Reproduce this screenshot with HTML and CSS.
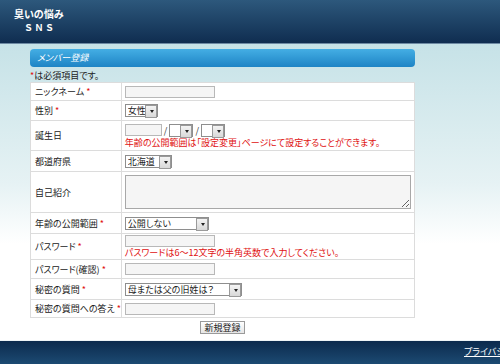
FILE: index.html
```html
<!DOCTYPE html>
<html lang="ja">

<head>
  <meta charset="UTF-8" />
  <meta name="viewport" content="width=device-width, initial-scale=1.0" />
  <title>臭いの悩み SNS - メンバー登録</title>
  <link rel="stylesheet" href="styles.css">
</head>

<body>
  <div class="header">
    <h1 class="logo">臭いの悩み<span>ＳＮＳ</span></h1>
  </div>

  <div class="main">
    <div class="content">
      <h2 class="box-title">メンバー登録</h2>
      <p class="note"><em>*</em>は必須項目です。</p>

      <form class="regist">
        <table class="form-table">
          <tr class="r-nick">
            <th>ニックネーム <em>*</em></th>
            <td><input type="text" class="txt" /></td>
          </tr>
          <tr class="r-sex">
            <th>性別 <em>*</em></th>
            <td><span class="sel w-sex"><select><option>女性</option></select></span></td>
          </tr>
          <tr class="r-birth">
            <th>誕生日</th>
            <td>
              <div class="birth">
                <input type="text" class="txt w-year" />
                <span class="slash">/</span>
                <span class="sel w-md"><select><option></option></select></span>
                <span class="slash">/</span>
                <span class="sel w-md"><select><option></option></select></span>
              </div>
              <p class="caution">年齢の公開範囲は「設定変更」ページにて設定することができます。</p>
            </td>
          </tr>
          <tr class="r-pref">
            <th>都道府県</th>
            <td><span class="sel w-pref"><select><option>北海道</option></select></span></td>
          </tr>
          <tr class="r-intro">
            <th>自己紹介</th>
            <td><textarea class="area"></textarea></td>
          </tr>
          <tr class="r-age">
            <th>年齢の公開範囲 <em>*</em></th>
            <td><span class="sel w-age"><select><option>公開しない</option></select></span></td>
          </tr>
          <tr class="r-pass">
            <th>パスワード <em>*</em></th>
            <td>
              <input type="password" class="txt" />
              <p class="caution">パスワードは6～12文字の半角英数で入力してください。</p>
            </td>
          </tr>
          <tr class="r-pass2">
            <th>パスワード(確認) <em>*</em></th>
            <td><input type="password" class="txt" /></td>
          </tr>
          <tr class="r-q">
            <th>秘密の質問 <em>*</em></th>
            <td><span class="sel w-q"><select><option>母または父の旧姓は？</option></select></span></td>
          </tr>
          <tr class="r-a">
            <th>秘密の質問への答え <em>*</em></th>
            <td><input type="text" class="txt" /></td>
          </tr>
        </table>
        <div class="operation">
          <button type="button" class="btn">新規登録</button>
        </div>
      </form>
    </div>
  </div>

  <div class="footer">
    <a href="#">プライバシーポリシー</a>
  </div>
</body>

</html>
```

FILE: styles.css
```css
* {
  box-sizing: border-box;
}

body {
  margin: 0;
  font-family: "Noto Sans CJK JP", "Noto Sans", sans-serif;
  font-size: 9px;
  font-feature-settings: "palt";
  color: #333;
  background: #fff;
}

/* ヘッダー */
.header {
  height: 44px;
  background: linear-gradient(#2d587c, #0f2d50);
  border-bottom: 1px solid #6d8aa3;
  padding: 7px 0 0 14px;
}

.logo {
  margin: 0;
  color: #fff;
  font-size: 10px;
  font-weight: bold;
  line-height: 13px;
}

.logo span {
  display: block;
  margin: 1px 0 0 11px;
  font-size: 9px;
  letter-spacing: 3px;
}

/* メイン */
.main {
  height: 296px;
  background: linear-gradient(#c6e2e7, #e6f2f4 140px, #fff 200px);
  padding-top: 5px;
}

.content {
  width: 385px;
  margin-left: 30px;
}

.box-title {
  margin: 0;
  height: 18px;
  line-height: 17px;
  padding-left: 7px;
  border-radius: 4px;
  background: linear-gradient(#44aee4, #1e84c5);
  color: #fff;
  font-size: 9px;
  font-weight: normal;
  font-style: italic;
}

.note {
  margin: 3px 0 0;
  height: 12px;
  line-height: 12px;
  color: #222;
}

em {
  font-style: normal;
  color: #e01010;
}

/* フォーム */
.form-table {
  width: 100%;
  border-collapse: collapse;
  background: #fff;
  border: 1px solid #dcdcdc;
}

.form-table th,
.form-table td {
  border-bottom: 1px solid #dcdcdc;
  padding: 0 0 0 3px;
  vertical-align: middle;
  text-align: left;
  font-weight: normal;
}

.form-table th {
  width: 90px;
  padding-left: 4px;
  border-right: 1px solid #dcdcdc;
  color: #222;
  white-space: nowrap;
}

.r-nick { height: 18px; }
.r-sex { height: 20px; }
.r-birth { height: 30px; }
.r-pref { height: 21px; }
.r-intro { height: 41px; }
.r-age { height: 21px; }
.r-pass { height: 26px; }
.r-pass2 { height: 19px; }
.r-q { height: 21px; }
.r-a { height: 18px; }

.txt {
  display: block;
  width: 90px;
  height: 12px;
  margin: 0;
  padding: 0 2px;
  border: 1px solid #b8b8b8;
  background: #f5f5f5;
  font: inherit;
}

.birth {
  display: flex;
  align-items: center;
}

.w-year {
  width: 37px;
}

.slash {
  margin: 0 2px;
  color: #333;
}

.sel {
  position: relative;
  display: block;
  height: 13px;
}

.birth .sel {
  display: inline-block;
}

.sel select {
  appearance: none;
  display: block;
  width: 100%;
  height: 100%;
  margin: 0;
  padding: 0 11px 0 2px;
  border: 1px solid #8e8e8e;
  border-radius: 0;
  background: #fff;
  font: inherit;
  font-size: 9px;
  line-height: 11px;
  color: #222;
}

/* プルダウンのボタン */
.sel::after {
  content: "";
  position: absolute;
  right: 1px;
  top: 1px;
  width: 10px;
  height: 11px;
  border: 1px solid #9a9a9a;
  background: linear-gradient(#f4f4f4, #d8d8d8);
  pointer-events: none;
}

.sel::before {
  content: "";
  position: absolute;
  right: 4px;
  top: 6px;
  border-top: 3px solid #222;
  border-left: 2px solid transparent;
  border-right: 2px solid transparent;
  z-index: 1;
  pointer-events: none;
}

.w-sex { width: 33px; }
.w-md { width: 24px; }
.w-pref { width: 47px; }
.w-age { width: 84px; }
.w-q { width: 117px; }

.area {
  display: block;
  width: 286px;
  height: 34px;
  margin: 0;
  border: 1px solid #a8a8a8;
  background: #f5f5f5;
  resize: both;
}

.caution {
  margin: 1px 0 0;
  line-height: 10px;
  color: #e01010;
  white-space: nowrap;
}

.operation {
  display: flex;
  justify-content: center;
  padding-top: 3px;
}

.btn {
  height: 13px;
  padding: 0 3px;
  border: 1px solid #9a9a9a;
  background: linear-gradient(#fff, #e6e6e6);
  font: inherit;
  font-size: 9px;
  line-height: 11px;
  color: #222;
  cursor: pointer;
}

/* フッター */
.footer {
  height: 24px;
  background: linear-gradient(#0c2a4d, #1c4a72);
  border-top: 1px solid #eef3f6;
  padding: 4px 0 0 464px;
  white-space: nowrap;
  overflow: hidden;
}

.footer a {
  color: #fff;
  font-size: 9px;
}
```
